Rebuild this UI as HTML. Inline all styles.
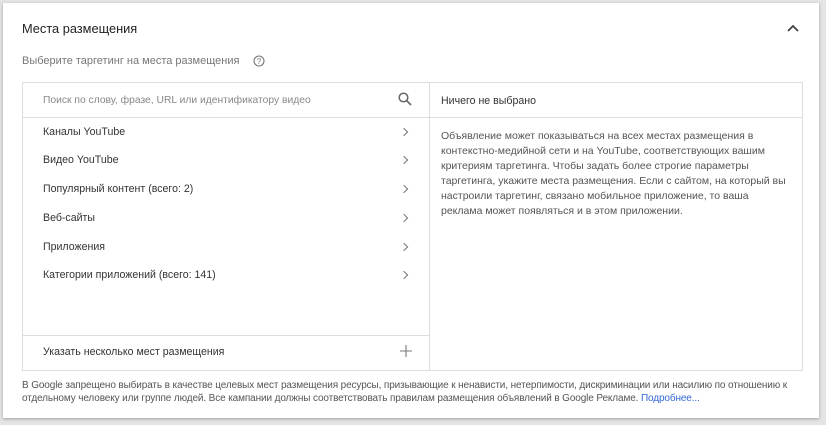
<!DOCTYPE html><html><head><meta charset="utf-8"><style>
*{margin:0;padding:0;box-sizing:border-box}
body{width:826px;height:425px;background:#e4e4e4;font-family:"Liberation Sans",sans-serif;position:relative;overflow:hidden}
.card{position:absolute;left:3px;top:3px;width:816px;height:415px;background:#fff;box-shadow:0 1px 3px rgba(0,0,0,.3)}
.a{position:absolute;white-space:nowrap}
.box{position:absolute;left:22px;top:82px;width:781px;height:289px;border:1px solid #ddd}
.row{position:absolute;left:20px;font-size:10.6px;color:#333}
.chev{position:absolute;left:378px;width:6px;height:6px;border-right:1.2px solid #777;border-top:1.2px solid #777;transform:rotate(45deg)}
</style></head><body>
<div class="card"></div>
<div class="a" style="left:22px;top:21px;font-size:12.8px;color:#222">Места размещения</div>
<svg class="a" style="left:787px;top:24px" width="12" height="8"><path d="M1 7L6 2L11 7" fill="none" stroke="#444" stroke-width="1.8"/></svg>
<div class="a" style="left:22px;top:55px;font-size:11px;color:#777">Выберите таргетинг на места размещения</div>
<svg class="a" style="left:253px;top:55px" width="12" height="12"><circle cx="6" cy="6" r="5" fill="none" stroke="#777" stroke-width="1.1"/><text x="6" y="9" font-size="8" text-anchor="middle" fill="#777" font-family="Liberation Sans">?</text></svg>
<div class="box">
 <div class="a" style="left:406px;top:0;width:1px;height:287px;background:#ddd"></div>
 <div class="a" style="left:0;top:34px;width:779px;height:1px;background:#ddd"></div>
 <div class="a" style="left:0;top:252px;width:406px;height:1px;background:#ddd"></div>
 <div class="row" style="top:12px;font-size:10.3px;color:#888">Поиск по слову, фразе, URL или идентификатору видео</div>
 <svg class="a" style="left:375px;top:9px" width="14" height="14"><circle cx="5.5" cy="5.5" r="4.3" fill="none" stroke="#666" stroke-width="1.5"/><path d="M8.7 8.7L13 13" stroke="#666" stroke-width="1.6"/></svg>
 <div class="row" style="top:43px">Каналы YouTube</div><div class="chev" style="top:46px"></div>
 <div class="row" style="top:71px">Видео YouTube</div><div class="chev" style="top:74px"></div>
 <div class="row" style="top:100px">Популярный контент (всего: 2)</div><div class="chev" style="top:103px"></div>
 <div class="row" style="top:129px">Веб-сайты</div><div class="chev" style="top:132px"></div>
 <div class="row" style="top:158px">Приложения</div><div class="chev" style="top:161px"></div>
 <div class="row" style="top:186px">Категории приложений (всего: 141)</div><div class="chev" style="top:189px"></div>
 <div class="row" style="top:263px">Указать несколько мест размещения</div>
 <svg class="a" style="left:377px;top:262px" width="12" height="12"><path d="M6 0V12M0 6H12" stroke="#777" stroke-width="1.1"/></svg>
 <div class="row" style="left:418px;top:12px">Ничего не выбрано</div>
 <div class="a" style="left:418px;top:46px;font-size:10.5px;line-height:15px;color:#555;white-space:normal;width:350px">Объявление может показываться на всех местах размещения в контекстно-медийной сети и на YouTube, соответствующих вашим критериям таргетинга. Чтобы задать более строгие параметры таргетинга, укажите места размещения. Если с сайтом, на который вы настроили таргетинг, связано мобильное приложение, то ваша реклама может появляться и в этом приложении.</div>
</div>
<div class="a" style="left:22px;top:379px;font-size:10px;line-height:13px;color:#555;letter-spacing:-0.12px">В Google запрещено выбирать в качестве целевых мест размещения ресурсы, призывающие к ненависти, нетерпимости, дискриминации или насилию по отношению к<br>отдельному человеку или группе людей. Все кампании должны соответствовать правилам размещения объявлений в Google Рекламе. <span style="color:#3367d6">Подробнее...</span></div>
</body></html>
